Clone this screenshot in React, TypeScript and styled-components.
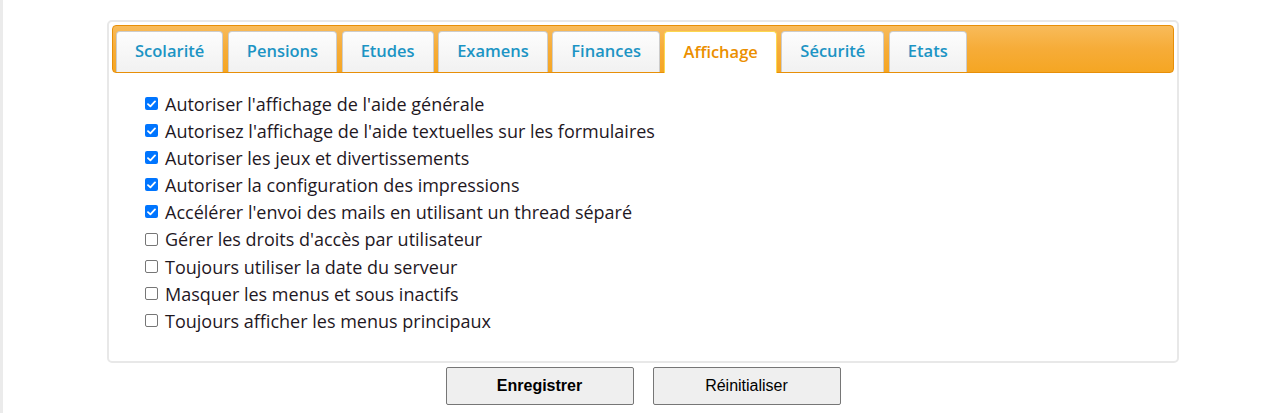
import React from "react";
import styled, { createGlobalStyle } from "styled-components";

const Global = createGlobalStyle`
  html, body { margin: 0; padding: 0; background: #fff; }
  body { font-family: "Open Sans", sans-serif; }
`;

const Page = styled.div`
  min-height: 413px;
  border-left: 3px solid #ebebeb;
  box-sizing: border-box;
  padding-top: 20px;
  display: flex;
  flex-direction: column;
  align-items: center;
`;

const Panel = styled.div`
  width: 1072px;
  box-sizing: border-box;
  border: 2px solid #e8e8e8;
  border-radius: 5px;
  padding: 3px;
  background: #fff;
`;

const TabBar = styled.div`
  display: flex;
  gap: 4.5px;
  align-items: flex-end;
  height: 48px;
  box-sizing: border-box;
  padding: 6px 3px 0 3px;
  border: 1px solid #e78f08;
  border-radius: 4px;
  background: linear-gradient(#f8bb5a 0%, #f6ac38 50%, #f5a623 100%);
`;

const Tab = styled.div<{ $active?: boolean }>`
  height: ${(p) => (p.$active ? "42px" : "41px")};
  margin-bottom: ${(p) => (p.$active ? "-1px" : "0")};
  box-sizing: border-box;
  padding: 0 18px 3px;
  display: flex;
  align-items: center;
  border: 1px solid ${(p) => (p.$active ? "#fbd850" : "#cccccc")};
  border-bottom: 0;
  border-radius: 4px 4px 0 0;
  background: ${(p) => (p.$active ? "#ffffff" : "linear-gradient(#fdfdfd, #f1f1f1)")};
  color: ${(p) => (p.$active ? "#eb8f00" : "#1c94c4")};
  font-family: "Open Sans", sans-serif;
  font-weight: 600;
  font-size: 16.5px;
  white-space: nowrap;
`;

const Content = styled.div`
  padding: 17px 0 24px 33px;
  display: flex;
  flex-direction: column;
`;

const Row = styled.label<{ $h?: number }>`
  display: flex;
  align-items: center;
  height: ${(p) => p.$h ?? 27}px;
  gap: 7px;
  font-family: "Open Sans", sans-serif;
  font-size: 18px;
  font-weight: 500;
  color: #1f181f;
`;

const Box = styled.span<{ $checked?: boolean }>`
  width: 13px;
  height: 13px;
  box-sizing: border-box;
  border-radius: 2px;
  flex: none;
  display: flex;
  align-items: center;
  justify-content: center;
  background: ${(p) => (p.$checked ? "#0075ff" : "#fff")};
  border: ${(p) => (p.$checked ? "none" : "1px solid #767676")};
`;

const Buttons = styled.div`
  display: flex;
  gap: 19px;
  margin-top: 4px;
`;

const Button = styled.button<{ $bold?: boolean }>`
  width: 188px;
  height: 38px;
  border: 1px solid #767676;
  border-radius: 2px;
  background: #efefef;
  font-family: "Liberation Sans", Arial, sans-serif;
  font-size: 16px;
  font-weight: ${(p) => (p.$bold ? 700 : 400)};
  color: #000;
`;

const Check = () => (
  <svg width="9" height="8" viewBox="0 0 9 8">
    <path d="M1 4.2 L3.4 6.4 L8 1.4" fill="none" stroke="#fff" strokeWidth="1.8" strokeLinecap="round" strokeLinejoin="round" />
  </svg>
);

const tabs = ["Scolarité", "Pensions", "Etudes", "Examens", "Finances", "Affichage", "Sécurité", "Etats"];

const options: [string, boolean, number?][] = [
  ["Autoriser l'affichage de l'aide générale", true],
  ["Autorisez l'affichage de l'aide textuelles sur les formulaires", true],
  ["Autoriser les jeux et divertissements", true],
  ["Autoriser la configuration des impressions", true],
  ["Accélérer l'envoi des mails en utilisant un thread séparé", true],
  ["Gérer les droits d'accès par utilisateur", false, 28],
  ["Toujours utiliser la date du serveur", false],
  ["Masquer les menus et sous inactifs", false],
  ["Toujours afficher les menus principaux", false],
];

export default function App() {
  return (
    <>
      <Global />
      <Page>
        <Panel>
          <TabBar>
            {tabs.map((t) => (
              <Tab key={t} $active={t === "Affichage"}>
                {t}
              </Tab>
            ))}
          </TabBar>
          <Content>
            {options.map(([label, checked, h]) => (
              <Row key={label} $h={h}>
                <Box $checked={checked}>{checked && <Check />}</Box>
                {label}
              </Row>
            ))}
          </Content>
        </Panel>
        <Buttons>
          <Button $bold>Enregistrer</Button>
          <Button>Réinitialiser</Button>
        </Buttons>
      </Page>
    </>
  );
}
